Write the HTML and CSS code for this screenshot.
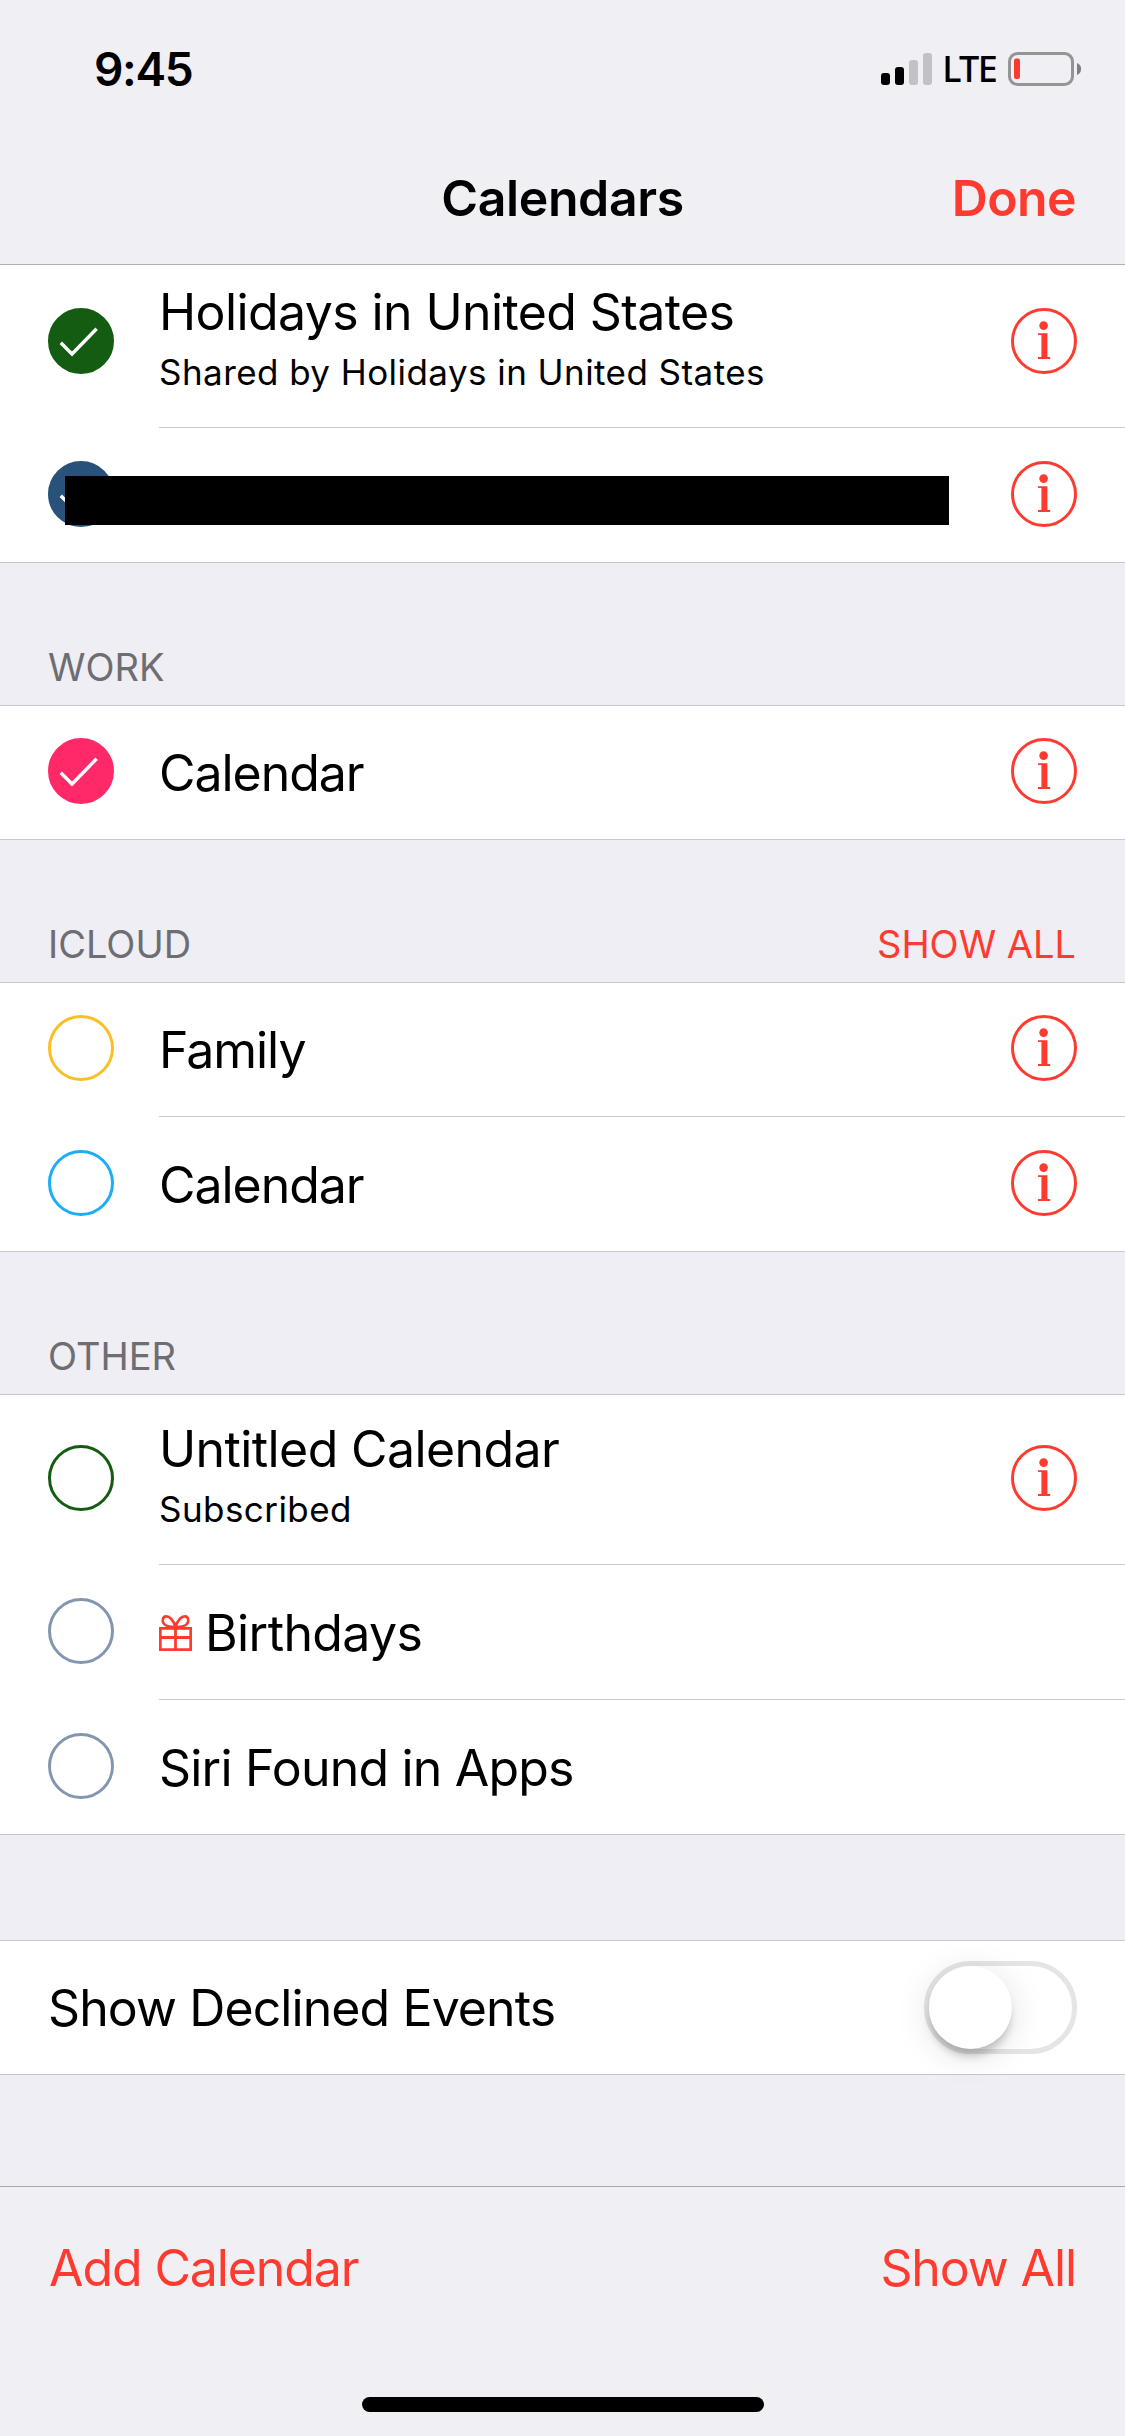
FILE: index.html
```html
<!DOCTYPE html>
<html lang="en">
<head>
  <meta charset="UTF-8" />
  <meta name="viewport" content="width=device-width, initial-scale=1.0"/>
  <title>Calendars</title>
  <link rel="stylesheet" href="styles.css">
</head>
<body>
  <!-- shared icons -->
  <svg class="defs" width="0" height="0">
    <symbol id="info" viewBox="0 0 66 66">
      <circle cx="33" cy="33" r="31.5" fill="none" stroke="currentColor" stroke-width="3"/>
      <circle cx="32.6" cy="17.6" r="4.3" fill="currentColor"/>
      <path d="M27 25.2h9.4v23.900h2.800v2H27v-2h3.400V27H27z" fill="currentColor"/>
    </symbol>
    <symbol id="check" viewBox="0 0 66 66">
      <path d="M12.800 34.800 24 46 48.600 20.800" fill="none" stroke="#fff" stroke-width="3.4"/>
    </symbol>
  </svg>

  <header class="header">
    <div class="status">
      <span class="time">9:45</span>
      <svg class="signal" width="52" height="34" viewBox="0 0 52 34">
        <rect x="0" y="21" width="9" height="12" rx="3"/>
        <rect x="14" y="15" width="9" height="18" rx="3"/>
        <rect x="28" y="8" width="9" height="25" rx="3" fill="#c2c1c6"/>
        <rect x="42" y="1" width="9" height="32" rx="3" fill="#c2c1c6"/>
      </svg>
      <span class="network">LTE</span>
      <svg class="battery" width="75" height="34" viewBox="0 0 75 34">
        <rect x="2.5" y="1.5" width="63" height="31" rx="8" fill="none" stroke="#949497" stroke-width="3"/>
        <rect x="7" y="6.5" width="6" height="20.5" rx="2" fill="#ff3b30"/>
        <path d="M70 11c5.400 1.600 5.400 10.400 0 12z" fill="#7f7f83"/>
      </svg>
    </div>
    <div class="navbar">
      <h1>Calendars</h1>
      <a class="done">Done</a>
    </div>
  </header>

  <main>
    <div class="group">
      <div class="row tall">
        <span class="circle checked green"><svg><use href="#check"/></svg></span>
        <div class="row-body">
          <div class="label">
            <div class="title">Holidays in United States</div>
            <div class="subtitle">Shared by Holidays in United States</div>
          </div>
          <svg class="info"><use href="#info"/></svg>
        </div>
      </div>
      <div class="row">
        <span class="circle checked navy"><svg><use href="#check"/></svg></span>
        <div class="row-body">
          <div class="label"></div>
          <svg class="info"><use href="#info"/></svg>
        </div>
        <div class="redacted"></div>
      </div>
    </div>

    <div class="section-header"><span>WORK</span></div>
    <div class="group">
      <div class="row">
        <span class="circle checked pink"><svg><use href="#check"/></svg></span>
        <div class="row-body">
          <div class="label"><div class="title tight">Calendar</div></div>
          <svg class="info"><use href="#info"/></svg>
        </div>
      </div>
    </div>

    <div class="section-header"><span>ICLOUD</span><a>SHOW ALL</a></div>
    <div class="group">
      <div class="row">
        <span class="circle yellow"></span>
        <div class="row-body">
          <div class="label"><div class="title tight">Family</div></div>
          <svg class="info"><use href="#info"/></svg>
        </div>
      </div>
      <div class="row">
        <span class="circle blue"></span>
        <div class="row-body">
          <div class="label"><div class="title tight">Calendar</div></div>
          <svg class="info"><use href="#info"/></svg>
        </div>
      </div>
    </div>

    <div class="section-header"><span>OTHER</span></div>
    <div class="group">
      <div class="row tall">
        <span class="circle green"></span>
        <div class="row-body">
          <div class="label">
            <div class="title">Untitled Calendar</div>
            <div class="subtitle">Subscribed</div>
          </div>
          <svg class="info"><use href="#info"/></svg>
        </div>
      </div>
      <div class="row">
        <span class="circle slate"></span>
        <div class="row-body">
          <svg class="gift" width="33" height="36" viewBox="0 0 33 36" fill="none" stroke="#ff3b30">
            <path d="M1.300 13.300h30.400v21.400H1.300z M1.300 22.500h30.400 M16.500 12v23" stroke-width="2.800"/>
            <path d="M16.500 12C14.500 5 10.500 1.200 7 1.400 3.500 1.600 2.800 6.200 5 8.800 7 11.300 11.500 12.200 16.500 12z M16.500 12C18.500 5 22.500 1.200 26 1.400c3.500.2 4.200 4.800 2 7.400C26 11.300 21.500 12.200 16.500 12z" stroke-width="2.600"/>
          </svg>
          <div class="label"><div class="title">Birthdays</div></div>
        </div>
      </div>
      <div class="row">
        <span class="circle slate"></span>
        <div class="row-body">
          <div class="label"><div class="title wide">Siri Found in Apps</div></div>
        </div>
      </div>
    </div>

    <div class="group settings">
      <div class="row">
        <div class="title">Show Declined Events</div>
        <div class="switch"><div class="knob"></div></div>
      </div>
    </div>
  </main>

  <footer class="toolbar">
    <div class="actions">
      <a>Add Calendar</a>
      <a>Show All</a>
    </div>
    <div class="home-indicator"></div>
  </footer>
</body>
</html>
```
FILE: styles.css
```css
* {
  box-sizing: border-box;
}

body {
  font-family: Inter, "Liberation Sans", sans-serif;
  font-size: 50px;
  line-height: 60px;
  letter-spacing: -0.6px;
  background-color: #efeef4;
  color: #000;
  margin: 0;
  height: 2436px;
  display: flex;
  flex-direction: column;
  overflow: hidden;
}

.defs {
  position: absolute;
}

a {
  color: #ff3b30;
}

/* header */
.header {
  height: 265px;
  flex: none;
  padding-top: 39px;
  background-color: #f0eff4;
  border-bottom: 1px solid #b2b2b5;
  position: relative;
  z-index: 1;
}

.status {
  display: flex;
  align-items: center;
  height: 60px;
  padding: 0 43px 0 94px;
}

.time {
  font-size: 46px;
  font-weight: 600;
  letter-spacing: -1.3px;
  margin-right: auto;
}

.network {
  font-family: "Noto Sans", sans-serif;
  font-size: 36px;
  font-weight: 500;
  letter-spacing: -1.7px;
  margin: 0 11px 0 9px;
}

.navbar {
  display: grid;
  grid-template-columns: 1fr auto 1fr;
  padding: 69px 49px 0;
  font-weight: 600;
}

h1 {
  grid-column: 2;
  margin: 0;
  font-size: 50px;
  font-weight: 600;
  letter-spacing: -0.4px;
}

.done {
  justify-self: end;
}

/* list, scrolled a little under the header */
main {
  margin-top: -8px;
}

.group {
  background-color: #fff;
  box-shadow: inset 0 1px 0 #c8c7cc, inset 0 -1px 0 #c8c7cc;
}

.row {
  display: flex;
  align-items: center;
  height: 135px;
  padding-left: 48px;
  position: relative;
}

.row.tall {
  height: 171px;
}

.row-body {
  flex: 1;
  align-self: stretch;
  display: flex;
  align-items: center;
  margin-left: 45px;
  padding-right: 48px;
  border-bottom: 1px solid #c8c7cc;
}

.row:last-child .row-body {
  border-bottom-color: transparent;
}

.label {
  flex: 1;
  padding-top: 2px;
}

.tall .label {
  align-self: flex-start;
  padding-top: 25px;
}

.title.tight {
  letter-spacing: -1.05px;
}

.title.wide {
  letter-spacing: -0.8px;
}

.subtitle {
  font-size: 35px;
  line-height: 44px;
  letter-spacing: 0.44px;
  margin-top: 8px;
}

.circle {
  width: 66px;
  height: 66px;
  margin-bottom: 3px;
  border: 3px solid;
  border-radius: 50%;
}

.circle svg {
  display: block;
  width: 66px;
  height: 66px;
  margin: -3px;
}

.circle.checked {
  background-color: currentColor;
}

.green { color: #145c12; }
.navy { color: #29527a; }
.pink { color: #ff2968; }
.yellow { color: #f9bf24; }
.blue { color: #1badf8; }
.slate { color: #8296b0; }

.info {
  width: 66px;
  height: 66px;
  margin-bottom: 2px;
  color: #ff3b30;
}

.gift {
  margin: 1px 13px 0 0;
}

.redacted {
  position: absolute;
  left: 65px;
  top: 48px;
  width: 884px;
  height: 49px;
  background-color: #000;
}

.section-header {
  display: flex;
  justify-content: space-between;
  align-items: flex-end;
  height: 142px;
  padding: 0 49px 14px 48px;
  font-size: 38px;
  line-height: 48px;
  letter-spacing: 0;
  color: #6d6d72;
}

/* declined events switch */
.settings {
  margin-top: 105px;
}

.settings .row {
  justify-content: space-between;
  padding-right: 48px;
}

.settings .title {
  letter-spacing: -0.9px;
}

.switch {
  width: 153px;
  height: 93px;
  border: 5px solid #e5e5e5;
  border-radius: 47px;
}

.knob {
  width: 83px;
  height: 83px;
  border-radius: 50%;
  background-color: #fff;
  box-shadow: 0 9px 9px -2px rgba(0,0,0,0.2), 0 6px 36px rgba(0,0,0,0.12);
}

/* bottom bar */
.toolbar {
  height: 250px;
  margin-top: auto;
  padding-top: 51px;
  background-color: #f0eff4;
  border-top: 1px solid #a9a8ae;
}

.actions {
  display: flex;
  justify-content: space-between;
  padding: 0 49px 0 49px;
  letter-spacing: -1.1px;
}

.home-indicator {
  width: 402px;
  height: 15px;
  margin: 99px 0 0 362px;
  border-radius: 8px;
  background-color: #000;
}
```
